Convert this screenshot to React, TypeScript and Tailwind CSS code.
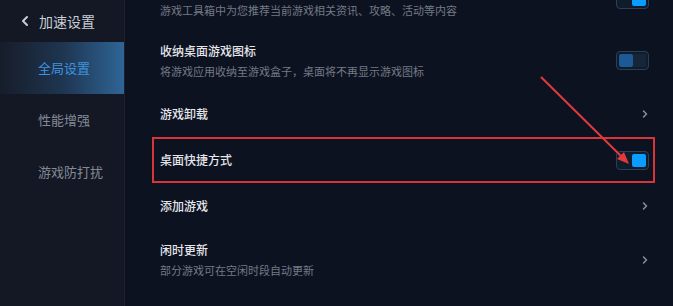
import { ChevronLeft, ChevronRight } from "lucide-react";

interface Row {
  title?: string;
  desc?: string;
  kind: "on" | "off" | "link";
  mark?: boolean;
}

// first row is scrolled up: only its description is still in view
const rows: Row[] = [
  { desc: "游戏工具箱中为您推荐当前游戏相关资讯、攻略、活动等内容", kind: "on" },
  { title: "收纳桌面游戏图标", desc: "将游戏应用收纳至游戏盒子，桌面将不再显示游戏图标", kind: "off" },
  { title: "游戏卸载", kind: "link" },
  { title: "桌面快捷方式", kind: "on", mark: true },
  { title: "添加游戏", kind: "link" },
  { title: "闲时更新", desc: "部分游戏可在空闲时段自动更新", kind: "link" },
];

function Toggle({ on }: { on: boolean }) {
  return (
    <div className="w-[33px] h-[19px] rounded-[4px] border border-[#26405c] bg-[#111c2b] p-[2px] flex">
      {on ? (
        <>
          <div className="flex-1" />
          <div className="w-[14px] h-full rounded-[2px] bg-[#0b9cff]" />
        </>
      ) : (
        <>
          <div className="w-[14px] h-full rounded-[2px] bg-[#1c5a96]" />
          <div className="flex-1 bg-[#162538]" />
        </>
      )}
    </div>
  );
}

export default function App() {
  const side = ["全局设置", "性能增强", "游戏防打扰"];

  return (
    <div
      className="relative w-[673px] h-[306px] overflow-hidden flex bg-[#0d1220]"
      style={{ fontFamily: '"Noto Sans CJK SC", "Noto Sans", sans-serif' }}
    >
      {/* Sidebar */}
      <div className="w-[125px] shrink-0 bg-[#131824] border-r border-[#1a2030] flex flex-col">
        <div className="h-[42px] flex items-center pl-[17px] gap-[6px] text-[#c9cdd5]">
          <ChevronLeft className="w-[16px] h-[16px]" strokeWidth={3} />
          <span className="text-[14px]">加速设置</span>
        </div>
        {side.map((s, i) => (
          <div
            key={s}
            className={`h-[52px] flex items-center pl-[38px] text-[13px] ${
              i === 0
                ? "bg-gradient-to-r from-[#161d2a] via-[#1e3550] to-[#2f6597] text-[#3d93e0]"
                : "text-[#848a96]"
            }`}
          >
            {s}
          </div>
        ))}
      </div>

      {/* Settings list */}
      <div className="flex-1 flex flex-col -mt-[31px]">
        {rows.map((r, i) => (
          <div
            key={i}
            className={`relative flex items-center pl-[35px] pr-[24px] ${r.desc ? "h-[61px]" : "h-[46px]"}`}
          >
            <div className="flex-1 flex flex-col">
              {r.title ? (
                <span className="text-[12px] leading-[18px] text-[#e4e6ea] font-medium">{r.title}</span>
              ) : (
                <div className="h-[18px]" />
              )}
              {r.desc && (
                <span className="text-[11px] leading-[18px] mt-[2px] text-[#747a86]">{r.desc}</span>
              )}
            </div>
            {r.kind === "link" ? (
              <ChevronRight className="w-[12px] h-[12px] mr-[-2px] text-[#8a909b]" strokeWidth={3} />
            ) : (
              <Toggle on={r.kind === "on"} />
            )}
            {r.mark && (
              <div className="absolute left-[27px] right-[18px] top-0 bottom-0 border-2 border-[#d8353a]" />
            )}
          </div>
        ))}
      </div>

      {/* Annotation arrow */}
      <svg className="absolute inset-0 pointer-events-none" width="673" height="306">
        <line x1="541" y1="77" x2="624" y2="159" stroke="#e23a3c" strokeWidth="2" />
        <polygon points="629,164 617,159 624,152" fill="#e23a3c" />
      </svg>
    </div>
  );
}
